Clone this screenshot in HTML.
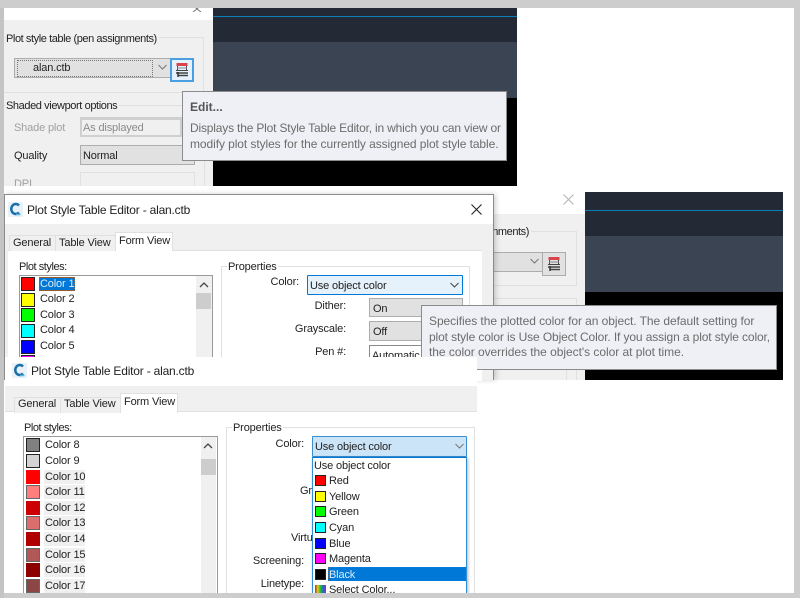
<!DOCTYPE html>
<html><head><meta charset="utf-8"><style>
html,body{margin:0;padding:0;background:#cdcdcd;width:800px;height:598px;overflow:hidden}
#p{position:relative;width:800px;height:598px;overflow:hidden;filter:blur(.35px);font-family:"Liberation Sans",sans-serif;color:#222}
#p div,#p svg{position:absolute}
.t{white-space:nowrap;font-size:11px;line-height:14px;height:14px;margin-top:1px;letter-spacing:-.15px}
.r{text-align:right}
.c{background:#e1e1e1;border:1px solid #adadad;box-sizing:border-box}
.g{border:1px solid #e0e0e0;box-sizing:border-box}
.tip{background:#eff0f6;border:1px solid #8c8c8c;box-sizing:border-box}
.tt{color:#6c6c6c;font-size:12px;line-height:16px;height:16px;white-space:nowrap}
.sw{width:12px;height:12px;border:1px solid #222}
.f{border-color:transparent}
.lab{white-space:nowrap;font-size:11px;line-height:14px;height:14px;padding:0 1px;margin-top:1px;letter-spacing:-.15px}
</style></head><body><div id="p">
<div style="left:4px;top:8px;width:790px;height:585px;background:#fff"></div>

<!-- panel 1 -->
<div style="left:4px;top:20px;width:209px;height:166px;background:#f0f0f0"></div>
<svg style="left:190px;top:8px" width="14" height="4"><path d="M3-3L7 1L11-3M3 4L7 1L11 4" stroke="#777" fill="none"/></svg>
<div class="g" style="left:4px;top:37px;width:200px;height:56px;border-left:0"></div>
<div class="t" style="left:6px;top:31px;background:#f0f0f0;padding-right:2px;letter-spacing:-.42px">Plot style table (pen assignments)</div>
<div class="c" style="left:14px;top:58px;width:157px;height:20px"></div>
<div style="left:17px;top:60px;width:134px;height:15px;border:1px dotted #777"></div>
<div class="t" style="left:33px;top:60px">alan.ctb</div>
<svg style="left:157px;top:64px" width="11" height="7"><path d="M1.500 1L5.500 5L9.500 1" stroke="#777" fill="none"/></svg>
<div style="left:170px;top:58px;width:24px;height:24px;box-sizing:border-box;background:#e5f1fb;border:2px solid #4a9fe0"></div>
<svg style="left:175px;top:62px" width="14" height="16"><rect x="1.500" y="1" width="11" height="3" fill="#d9434a"/><path d="M2.500 4V8.500M11.500 4V8.500M1 8.500H13" stroke="#444" fill="none"/><path d="M2 6H12" stroke="#888"/><path d="M1 11H13M3 13.500H13" stroke="#444" stroke-width="1.400"/><path d="M3 10V15" stroke="#333" stroke-width="1.500"/></svg>
<div style="left:4px;top:105px;width:200px;height:1px;background:#e0e0e0"></div>
<div style="left:204px;top:105px;width:1px;height:81px;background:#e0e0e0"></div>
<div class="t" style="left:6px;top:98px;background:#f0f0f0;padding-right:2px;letter-spacing:-.4px">Shaded viewport options</div>
<div class="t" style="left:14px;top:120px;color:#a0a0a0">Shade plot</div>
<div style="left:80px;top:117px;width:115px;height:20px;background:#cfcfcf"></div>
<div style="left:82px;top:120px;width:98px;height:15px;background:#f0f0f0"></div>
<div class="t" style="left:83px;top:120px;color:#8a8a8a">As displayed</div>
<div class="t" style="left:14px;top:148px">Quality</div>
<div class="c" style="left:80px;top:145px;width:115px;height:20px"></div>
<div class="t" style="left:83px;top:148px">Normal</div>
<div class="t" style="left:14px;top:176px;color:#a0a0a0">DPI</div>
<div class="g" style="left:80px;top:172px;width:115px;height:20px"></div>
<div style="left:4px;top:186px;width:209px;height:8px;background:#fff"></div>

<!-- dark 1 -->
<div style="left:213px;top:8px;width:304px;height:34px;background:#232a35"></div>
<div style="left:213px;top:16px;width:304px;height:1px;background:#0d7fb8"></div>
<div style="left:213px;top:42px;width:304px;height:56px;background:#3b4452"></div>
<div style="left:213px;top:98px;width:304px;height:88px;background:#000"></div>

<!-- tooltip 1 -->
<div class="tip" style="left:182px;top:91px;width:325px;height:70px"></div>
<div class="tt" style="left:190px;top:99px;font-weight:bold;color:#555">Edit...</div>
<div class="tt" style="left:190px;top:120px;letter-spacing:-.18px">Displays the Plot Style Table Editor, in which you can view or</div>
<div class="tt" style="left:190px;top:136px;letter-spacing:-.08px">modify plot styles for the currently assigned plot style table.</div>

<!-- panel 2 -->
<div style="left:494px;top:214px;width:91px;height:166px;background:#f0f0f0"></div>
<svg style="left:562px;top:193px" width="13" height="13"><path d="M1.500 1.500L11.500 11.500M11.500 1.500L1.500 11.500" stroke="#b5b5b5" stroke-width="1.100"/></svg>
<div class="g" style="left:480px;top:231px;width:97px;height:55px;border-left:0"></div>
<div class="t r" style="left:470px;top:224px;width:59px;background:#f0f0f0;letter-spacing:-.42px;padding-right:2px">nments)</div>
<div class="c" style="left:480px;top:252px;width:63px;height:20px"></div>
<svg style="left:529px;top:258px" width="11" height="7"><path d="M1.500 1L5.500 5L9.500 1" stroke="#777" fill="none"/></svg>
<div class="c" style="left:542px;top:252px;width:24px;height:24px"></div>
<svg style="left:547px;top:256px" width="14" height="16"><rect x="1.500" y="1" width="11" height="3" fill="#d9434a"/><path d="M2.500 4V8.500M11.500 4V8.500M1 8.500H13" stroke="#444" fill="none"/><path d="M2 6H12" stroke="#888"/><path d="M1 11H13M3 13.500H13" stroke="#444" stroke-width="1.400"/><path d="M3 10V15" stroke="#333" stroke-width="1.500"/></svg>
<div class="g" style="left:480px;top:298px;width:97px;height:82px;border-left:0;border-bottom:0"></div>
<div style="left:566px;top:369px;width:1px;height:11px;background:#e0e0e0"></div>

<!-- dark 2 -->
<div style="left:585px;top:192px;width:198px;height:44px;background:#232a35"></div>
<div style="left:585px;top:210px;width:198px;height:1px;background:#0d7fb8"></div>
<div style="left:585px;top:236px;width:198px;height:56px;background:#3b4452"></div>
<div style="left:585px;top:292px;width:198px;height:88px;background:#000"></div>

<!-- dialog 2 -->
<div style="left:4px;top:194px;width:490px;height:186px;box-sizing:border-box;background:#fff;border:1px solid #8a8a8a;border-bottom:0;box-shadow:2px 0 5px rgba(0,0,0,.18)"></div>
<div style="left:5px;top:224px;width:488px;height:156px;background:#f0f0f0"></div>
<svg style="left:8px;top:202px" width="15" height="15"><rect width="15" height="15" fill="#e8f2f8"/><path d="M11 3.500A4.500 5 0 1 0 11 10.500" stroke="#1b6fa8" stroke-width="2.500" fill="none"/><path d="M8 12.500H12.500" stroke="#5ab2dc" stroke-width="1.500"/></svg>
<div class="t" style="left:27px;top:202px;font-size:12px;letter-spacing:-.2px">Plot Style Table Editor - alan.ctb</div>
<svg style="left:470px;top:203px" width="13" height="13"><path d="M1.500 1.500L11.500 11.500M11.500 1.500L1.500 11.500" stroke="#222" stroke-width="1.100"/></svg>
<div style="left:8px;top:250px;width:474px;height:130px;background:#fff;border-top:1px solid #e0e0e0"></div>
<div style="left:9px;top:235px;width:45px;height:15px;background:#f0f0f0;border:1px solid #e0e0e0;border-bottom:0"></div>
<div style="left:55px;top:235px;width:60px;height:15px;background:#f0f0f0;border:1px solid #e0e0e0;border-bottom:0"></div>
<div style="left:115px;top:232px;width:58px;height:19px;background:#fff;border:1px solid #e0e0e0;border-bottom:0;box-sizing:border-box"></div>
<div class="t" style="left:13px;top:235px">General</div>
<div class="t" style="left:59px;top:235px">Table View</div>
<div class="t" style="left:119px;top:233px">Form View</div>
<div class="t" style="left:19px;top:259px;letter-spacing:-.45px">Plot styles:</div>
<div style="left:19px;top:275px;width:194px;height:85px;box-sizing:border-box;border:1px solid #9a9a9a;background:#fff"></div>
<div style="left:196px;top:276px;width:16px;height:84px;background:#f0f0f0"></div>
<svg style="left:199px;top:282px" width="10" height="6"><path d="M1 5L5 1L9 5" stroke="#444" stroke-width="1.300" fill="none"/></svg>
<div style="left:196px;top:293px;width:15px;height:16px;background:#cdcdcd"></div>
<div class="sw" style="left:21px;top:277px;background:#f00"></div>
<div class="sw" style="left:21px;top:293px;background:#ff0"></div>
<div class="sw" style="left:21px;top:308px;background:#0f0"></div>
<div class="sw" style="left:21px;top:324px;background:#0ff"></div>
<div class="sw" style="left:21px;top:340px;background:#00f"></div>
<div class="sw" style="left:21px;top:355px;background:#f0f"></div>
<div class="t" style="left:39px;top:276px;background:#0078d7;color:#dcecf8;padding:0 1px;outline:1px dotted #a06030;outline-offset:-1px">Color 1</div>
<div class="t" style="left:40px;top:291px">Color 2</div>
<div class="t" style="left:40px;top:307px">Color 3</div>
<div class="t" style="left:40px;top:322px">Color 4</div>
<div class="t" style="left:40px;top:338px">Color 5</div>
<div class="g" style="left:221px;top:266px;width:249px;height:114px"></div>
<div class="t" style="left:227px;top:259px;background:#fff;padding:0 1px">Properties</div>
<div class="t r" style="left:250px;top:274px;width:49px">Color:</div>
<div style="left:307px;top:275px;width:156px;height:20px;box-sizing:border-box;background:#e5f1fb;border:1px solid #0078d7;border-radius:1px"></div>
<div class="t" style="left:310px;top:278px">Use object color</div>
<svg style="left:449px;top:282px" width="11" height="7"><path d="M1.500 1L5.500 5L9.500 1" stroke="#444" fill="none"/></svg>
<div class="t r" style="left:290px;top:298px;width:56px">Dither:</div>
<div class="c" style="left:369px;top:298px;width:94px;height:19px"></div>
<div class="t" style="left:373px;top:301px">On</div>
<div class="t r" style="left:280px;top:321px;width:66px">Grayscale:</div>
<div class="c" style="left:369px;top:321px;width:94px;height:20px"></div>
<div class="t" style="left:373px;top:324px">Off</div>
<div class="t r" style="left:290px;top:344px;width:56px">Pen #:</div>
<div style="left:369px;top:345px;width:94px;height:20px;box-sizing:border-box;background:#fff;border:1px solid #8a8a8a"></div>
<div class="t" style="left:372px;top:348px">Automatic</div>

<!-- tooltip 2 -->
<div class="tip" style="left:421px;top:305px;width:356px;height:65px"></div>
<div class="tt" style="left:429px;top:313px;letter-spacing:-.06px">Specifies the plotted color for an object. The default setting for</div>
<div class="tt" style="left:429px;top:329px;letter-spacing:-.12px">plot style color is Use Object Color. If you assign a plot style color,</div>
<div class="tt" style="left:429px;top:344px;letter-spacing:-.04px">the color overrides the object's color at plot time.</div>

<!-- dialog 3 -->
<div style="left:5px;top:357px;width:472px;height:236px;background:#fff"></div>
<div style="left:5px;top:386px;width:472px;height:26px;background:#f0f0f0;border-bottom:1px solid #e0e0e0;box-sizing:border-box"></div>
<svg style="left:12px;top:363px" width="15" height="15"><rect width="15" height="15" fill="#e8f2f8"/><path d="M11 3.500A4.500 5 0 1 0 11 10.500" stroke="#1b6fa8" stroke-width="2.500" fill="none"/><path d="M8 12.500H12.500" stroke="#5ab2dc" stroke-width="1.500"/></svg>
<div class="t" style="left:31px;top:363px;font-size:12px;letter-spacing:-.2px">Plot Style Table Editor - alan.ctb</div>
<div style="left:14px;top:397px;width:45px;height:15px;background:#f0f0f0;border:1px solid #e0e0e0;border-bottom:0"></div>
<div style="left:60px;top:397px;width:60px;height:15px;background:#f0f0f0;border:1px solid #e0e0e0;border-bottom:0"></div>
<div style="left:120px;top:393px;width:58px;height:20px;background:#fff;border:1px solid #e0e0e0;border-bottom:0;box-sizing:border-box"></div>
<div class="t" style="left:18px;top:396px">General</div>
<div class="t" style="left:64px;top:396px">Table View</div>
<div class="t" style="left:124px;top:394px">Form View</div>
<div class="t" style="left:24px;top:420px;letter-spacing:-.45px">Plot styles:</div>
<div style="left:23px;top:436px;width:195px;height:157px;box-sizing:border-box;border:1px solid #9a9a9a;border-bottom:0;background:#fff"></div>
<div style="left:201px;top:437px;width:15px;height:156px;background:#f0f0f0"></div>
<svg style="left:203px;top:443px" width="10" height="6"><path d="M1 5L5 1L9 5" stroke="#444" stroke-width="1.300" fill="none"/></svg>
<div style="left:201px;top:459px;width:15px;height:16px;background:#cdcdcd"></div>
<div class="sw" style="left:26px;top:438px;background:#808080"></div>
<div class="sw" style="left:26px;top:454px;background:#d3d3d3"></div>
<div class="sw f" style="left:26px;top:470px;background:#f00"></div>
<div class="sw" style="left:26px;top:485px;background:#ff7f7f;border-color:#666"></div>
<div class="sw f" style="left:26px;top:501px;background:#cc0000"></div>
<div class="sw" style="left:26px;top:516px;background:#dd6e6e;border-color:#666"></div>
<div class="sw f" style="left:26px;top:532px;background:#b00000"></div>
<div class="sw" style="left:26px;top:548px;background:#b25858;border-color:#666"></div>
<div class="sw f" style="left:26px;top:563px;background:#8c0000"></div>
<div class="sw" style="left:26px;top:579px;background:#8c4646;border-color:#666"></div>
<div class="t" style="left:45px;top:437px">Color 8</div>
<div class="t" style="left:45px;top:453px">Color 9</div>
<div class="lab" style="left:44px;top:469px;background:#f0f0f0;width:39px">Color 10</div>
<div class="lab" style="left:44px;top:484px;background:#f0f0f0;width:39px">Color 11</div>
<div class="lab" style="left:44px;top:500px;background:#f0f0f0;width:39px">Color 12</div>
<div class="lab" style="left:44px;top:515px;background:#f0f0f0;width:39px">Color 13</div>
<div class="lab" style="left:44px;top:531px;background:#f0f0f0;width:39px">Color 14</div>
<div class="lab" style="left:44px;top:547px;background:#f0f0f0;width:39px">Color 15</div>
<div class="lab" style="left:44px;top:562px;background:#f0f0f0;width:39px">Color 16</div>
<div class="lab" style="left:44px;top:578px;background:#f0f0f0;width:39px">Color 17</div>
<div class="g" style="left:226px;top:427px;width:249px;height:170px"></div>
<div class="t" style="left:232px;top:420px;background:#fff;padding:0 1px">Properties</div>
<div class="t r" style="left:255px;top:436px;width:49px">Color:</div>
<div style="left:312px;top:436px;width:155px;height:21px;box-sizing:border-box;background:#cce4f7;border:1px solid #3a8fd0;border-radius:1px"></div>
<div class="t" style="left:315px;top:439px">Use object color</div>
<svg style="left:454px;top:443px" width="11" height="7"><path d="M1.500 1L5.500 5L9.500 1" stroke="#777" fill="none"/></svg>
<div class="t" style="left:300px;top:483px">Gr</div>
<div class="t" style="left:291px;top:530px">Virtu</div>
<div class="t r" style="left:240px;top:553px;width:64px">Screening:</div>
<div class="t r" style="left:240px;top:576px;width:64px">Linetype:</div>
<div style="left:312px;top:457px;width:155px;height:136px;box-sizing:border-box;background:#fff;border:1px solid #2f8fd6;border-top:1px solid #0078d7;border-bottom:0;box-shadow:1px 1px 3px rgba(0,0,0,.3)"></div>
<div class="t" style="left:314px;top:458px">Use object color</div>
<div class="sw" style="left:315px;top:475px;width:9px;height:9px;background:#f00"></div>
<div class="sw" style="left:315px;top:491px;width:9px;height:9px;background:#ff0"></div>
<div class="sw" style="left:315px;top:506px;width:9px;height:9px;background:#0f0"></div>
<div class="sw" style="left:315px;top:522px;width:9px;height:9px;background:#0ff"></div>
<div class="sw" style="left:315px;top:538px;width:9px;height:9px;background:#00f"></div>
<div class="sw" style="left:315px;top:553px;width:9px;height:9px;background:#f0f"></div>
<div class="sw" style="left:315px;top:569px;width:9px;height:9px;background:#000"></div>
<div style="left:315px;top:585px;width:11px;height:8px;background:linear-gradient(90deg,#c22,#dc2,#2b3,#26c,#a2c)"></div>
<div class="t" style="left:329px;top:473px">Red</div>
<div class="t" style="left:329px;top:489px">Yellow</div>
<div class="t" style="left:329px;top:504px">Green</div>
<div class="t" style="left:329px;top:520px">Cyan</div>
<div class="t" style="left:329px;top:536px">Blue</div>
<div class="t" style="left:329px;top:551px">Magenta</div>
<div style="left:328px;top:567px;width:138px;height:14px;background:#0078d7;outline:1px dotted #5a6a70;outline-offset:-1px"></div>
<div class="t" style="left:329px;top:567px;color:#dcecf8">Black</div>
<div class="t" style="left:329px;top:582px">Select Color...</div>

<!-- frame -->
<div style="left:0;top:593px;width:800px;height:5px;background:#cdcdcd"></div>
<div style="left:0;top:0;width:4px;height:598px;background:#c4c4c4"></div>
<div style="left:794px;top:0;width:6px;height:598px;background:#cdcdcd"></div>
<div style="left:0;top:0;width:800px;height:8px;background:#cdcdcd"></div>
</div></body></html>
